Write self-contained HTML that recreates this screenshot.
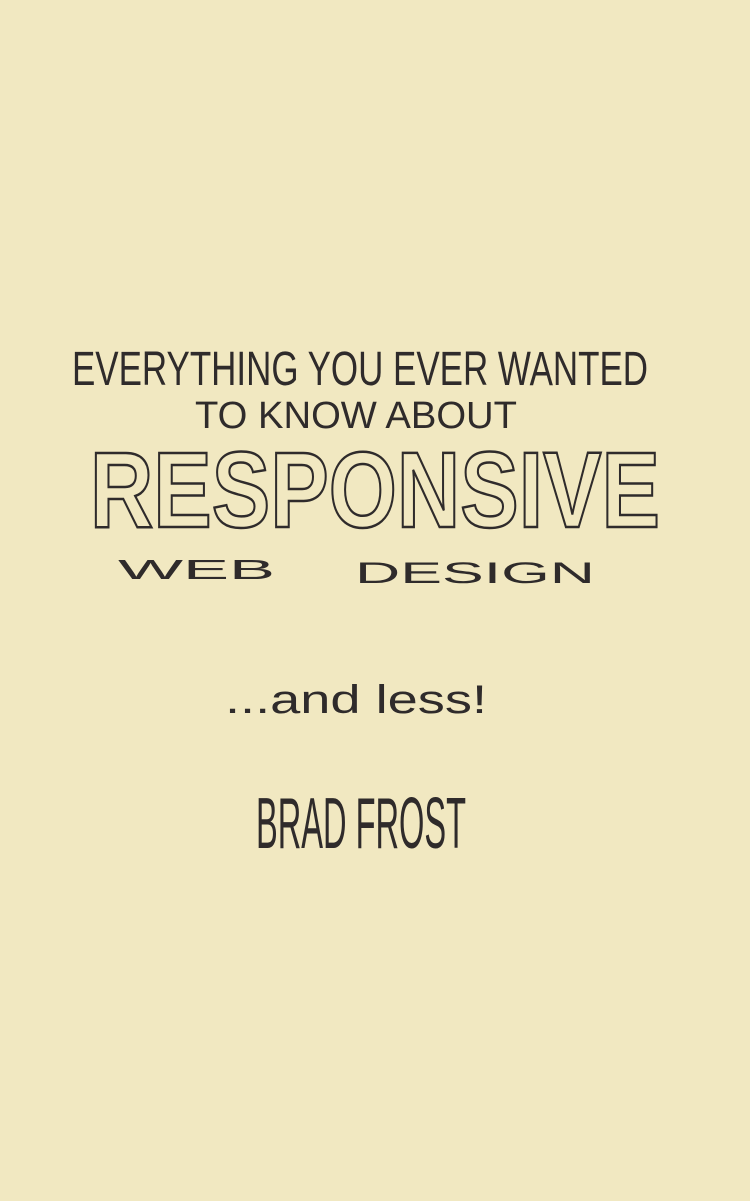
<!DOCTYPE html>
<html><head><meta charset="utf-8"><style>
html,body{margin:0;padding:0;background:#f1e8c1;}
svg{display:block}
</style></head><body>
<svg width="750" height="1201" viewBox="0 0 750 1201" xmlns="http://www.w3.org/2000/svg">
<rect width="750" height="1201" fill="#f1e8c1"/>
<g font-family="Liberation Sans, sans-serif" fill="#2f2b2b">
<text x="72" y="385" font-size="48" textLength="576" lengthAdjust="spacingAndGlyphs">EVERYTHING YOU EVER WANTED</text>
<text x="195" y="428" font-size="38" textLength="322" lengthAdjust="spacingAndGlyphs">TO KNOW ABOUT</text>
<text x="90" y="527" font-size="108" font-weight="bold" fill="none" stroke="#2f2b2b" stroke-width="2.5" textLength="570" lengthAdjust="spacingAndGlyphs">RESPONSIVE</text>
<text x="118" y="579" font-size="28" textLength="157" lengthAdjust="spacingAndGlyphs">WEB</text>
<text x="355" y="583" font-size="30" textLength="240" lengthAdjust="spacingAndGlyphs">DESIGN</text>
<text x="225" y="713" font-size="40" textLength="262" lengthAdjust="spacingAndGlyphs">...and less!</text>
<text x="256" y="848" font-size="72" textLength="210" lengthAdjust="spacingAndGlyphs">BRAD FROST</text>
</g>
</svg>
</body></html>
